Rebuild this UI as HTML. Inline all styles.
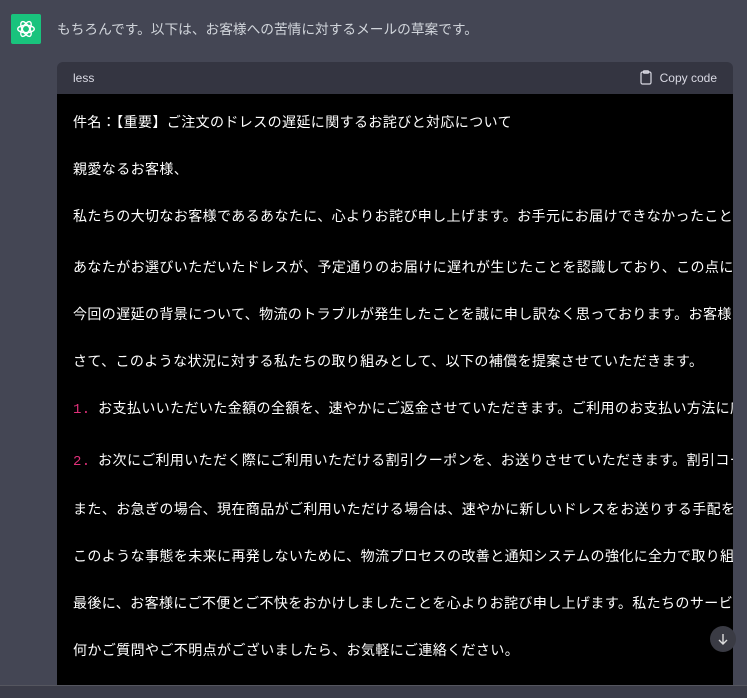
<!DOCTYPE html>
<html><head><meta charset="utf-8"><style>
body{margin:0;width:747px;height:697px;background:#444654;overflow:hidden;position:relative;font-family:"Liberation Sans","Noto Sans CJK JP",sans-serif;}
.logo{position:absolute;left:11px;top:14px;width:30px;height:30px;background:#19c37d;border-radius:2px;display:flex;align-items:center;justify-content:center}
.intro{position:absolute;left:57px;top:18px;font-size:13.7px;color:#d1d5db;white-space:nowrap}
.hdr{position:absolute;left:57px;top:62px;width:676px;height:32px;background:#343541;border-radius:6px 6px 0 0}
.lang{position:absolute;left:16px;top:9px;font-size:12px;color:#d9d9e3}
.copy{position:absolute;right:16px;top:8px;font-size:12px;color:#d9d9e3;display:flex;align-items:center;gap:8px}
.code{position:absolute;left:57px;top:94px;width:676px;height:591px;background:#000;overflow:hidden}
.l{position:absolute;left:16px;font-size:14px;color:#fff;white-space:nowrap;line-height:20px;letter-spacing:0.4px;font-family:"Noto Sans CJK JP",sans-serif}
.n{color:#df3079;font-family:"Liberation Mono",monospace;margin-right:4px}
.btm{position:absolute;left:0;top:685px;width:747px;height:12px;background:#3b3c48;border-top:1px solid #55565f}
.down{position:absolute;left:710px;top:626px;width:26px;height:26px;border-radius:50%;background:#3a3b44;display:flex;align-items:center;justify-content:center}
</style></head><body>
<div class="logo"><svg width="22" height="22" viewBox="0 0 24 24" fill="none" stroke="#fff" stroke-width="1.5"><circle cx="12" cy="12" r="4"/><ellipse cx="12" cy="12" rx="9" ry="4"/><ellipse cx="12" cy="12" rx="9" ry="4" transform="rotate(60 12 12)"/><ellipse cx="12" cy="12" rx="9" ry="4" transform="rotate(120 12 12)"/></svg></div>
<div class="intro">もちろんです。以下は、お客様への苦情に対するメールの草案です。</div>
<div class="hdr"><div class="lang">less</div><div class="copy"><svg width="12" height="15" viewBox="0 0 12 15" fill="none" stroke="#d9d9e3" stroke-width="1.2"><rect x="1" y="2" width="10" height="12" rx="1.5"/><rect x="3.5" y="0.8" width="5" height="2.4" rx="0.6"/></svg>Copy code</div></div>
<div class="code">
<div class="l" style="top:18px">件名：【重要】ご注文のドレスの遅延に関するお詫びと対応について</div>
<div class="l" style="top:65px">親愛なるお客様、</div>
<div class="l" style="top:112px">私たちの大切なお客様であるあなたに、心よりお詫び申し上げます。お手元にお届けできなかったことに対し</div>
<div class="l" style="top:163px">あなたがお選びいただいたドレスが、予定通りのお届けに遅れが生じたことを認識しており、この点について</div>
<div class="l" style="top:210px">今回の遅延の背景について、物流のトラブルが発生したことを誠に申し訳なく思っております。お客様の信頼</div>
<div class="l" style="top:257px">さて、このような状況に対する私たちの取り組みとして、以下の補償を提案させていただきます。</div>
<div class="l" style="top:304px"><span class="n">1.</span> お支払いいただいた金額の全額を、速やかにご返金させていただきます。ご利用のお支払い方法に応じ</div>
<div class="l" style="top:356px"><span class="n">2.</span> お次にご利用いただく際にご利用いただける割引クーポンを、お送りさせていただきます。割引コード</div>
<div class="l" style="top:405px">また、お急ぎの場合、現在商品がご利用いただける場合は、速やかに新しいドレスをお送りする手配を進めさ</div>
<div class="l" style="top:452px">このような事態を未来に再発しないために、物流プロセスの改善と通知システムの強化に全力で取り組むこと</div>
<div class="l" style="top:499px">最後に、お客様にご不便とご不快をおかけしましたことを心よりお詫び申し上げます。私たちのサービスが</div>
<div class="l" style="top:546px">何かご質問やご不明点がございましたら、お気軽にご連絡ください。</div>
</div>
<div class="down"><svg width="12" height="12" viewBox="0 0 12 12" fill="none" stroke="#ddd" stroke-width="1.4"><path d="M6 1v10M2 7l4 4 4-4"/></svg></div>
<div class="btm"></div>
</body></html>
